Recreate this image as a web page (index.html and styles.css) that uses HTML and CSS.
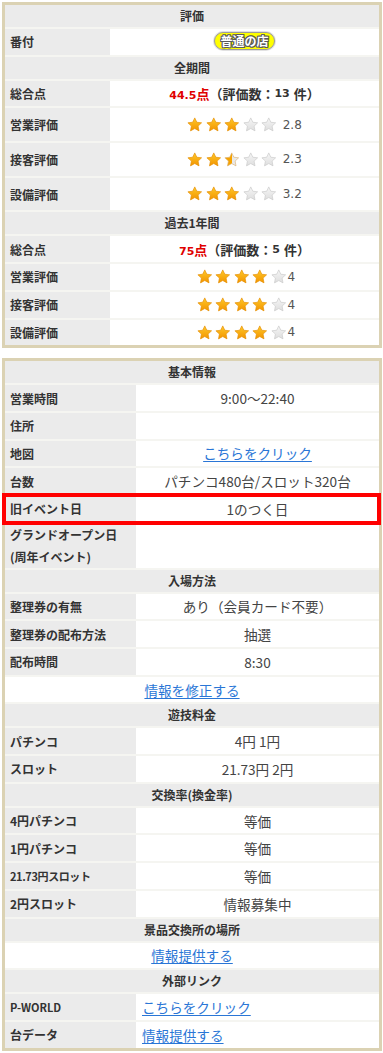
FILE: index.html
```html
<!DOCTYPE html>
<html lang="ja">
<head>
<meta charset="utf-8">
<title>評価</title>
<link rel="stylesheet" href="styles.css">
</head>
<body>
<svg class="defs" aria-hidden="true">
  <defs>
    <linearGradient id="gOn" x1="0" y1="0" x2="0" y2="1">
      <stop offset="0" stop-color="#ffc928"/>
      <stop offset="1" stop-color="#f29400"/>
    </linearGradient>
    <linearGradient id="gOff" x1="0" y1="0" x2="0" y2="1">
      <stop offset="0" stop-color="#f6f6f6"/>
      <stop offset="1" stop-color="#dedede"/>
    </linearGradient>
    <linearGradient id="gHalf" x1="0" y1="0" x2="1" y2="0">
      <stop offset="0" stop-color="#f6a300"/>
      <stop offset="0.5" stop-color="#f6a300"/>
      <stop offset="0.5" stop-color="#e9e9e9"/>
      <stop offset="1" stop-color="#e9e9e9"/>
    </linearGradient>
    <symbol id="st" viewBox="0 0 24 24">
      <path d="M12 1.4 15.2 8.1 22.6 9 17.2 14.1 18.6 21.5 12 17.9 5.4 21.5 6.8 14.1 1.4 9 8.8 8.1Z"/>
    </symbol>
  </defs>
</svg>

<div class="page">
  <section class="box b1">
    <div class="hd first">評価</div>
    <div class="row"><div class="lb">番付</div><div class="val"><span class="badge">普通の店</span></div></div>
    <div class="hd">全期間</div>
    <div class="row"><div class="lb">総合点</div><div class="val score"><span class="pt"><span class="dg">44.5</span>点</span>（評価数：<span class="dg cnt">13</span>件）</div></div>
    <div class="row tall"><div class="lb">営業評価</div><div class="val">
      <span class="stars">
        <svg class="star on"><use href="#st"/></svg><svg class="star on"><use href="#st"/></svg><svg class="star on"><use href="#st"/></svg><svg class="star off"><use href="#st"/></svg><svg class="star off"><use href="#st"/></svg>
      </span><span class="rate">2.8</span></div></div>
    <div class="row tall"><div class="lb">接客評価</div><div class="val">
      <span class="stars">
        <svg class="star on"><use href="#st"/></svg><svg class="star on"><use href="#st"/></svg><svg class="star half"><use href="#st"/></svg><svg class="star off"><use href="#st"/></svg><svg class="star off"><use href="#st"/></svg>
      </span><span class="rate">2.3</span></div></div>
    <div class="row tall"><div class="lb">設備評価</div><div class="val">
      <span class="stars">
        <svg class="star on"><use href="#st"/></svg><svg class="star on"><use href="#st"/></svg><svg class="star on"><use href="#st"/></svg><svg class="star off"><use href="#st"/></svg><svg class="star off"><use href="#st"/></svg>
      </span><span class="rate">3.2</span></div></div>
    <div class="hd">過去1年間</div>
    <div class="row"><div class="lb">総合点</div><div class="val score"><span class="pt"><span class="dg">75</span>点</span>（評価数：<span class="dg cnt">5</span>件）</div></div>
    <div class="row"><div class="lb">営業評価</div><div class="val shift">
      <span class="stars">
        <svg class="star on"><use href="#st"/></svg><svg class="star on"><use href="#st"/></svg><svg class="star on"><use href="#st"/></svg><svg class="star on"><use href="#st"/></svg><svg class="star off"><use href="#st"/></svg>
      </span><span class="rate tight">4</span></div></div>
    <div class="row"><div class="lb">接客評価</div><div class="val shift">
      <span class="stars">
        <svg class="star on"><use href="#st"/></svg><svg class="star on"><use href="#st"/></svg><svg class="star on"><use href="#st"/></svg><svg class="star on"><use href="#st"/></svg><svg class="star off"><use href="#st"/></svg>
      </span><span class="rate tight">4</span></div></div>
    <div class="row"><div class="lb">設備評価</div><div class="val shift">
      <span class="stars">
        <svg class="star on"><use href="#st"/></svg><svg class="star on"><use href="#st"/></svg><svg class="star on"><use href="#st"/></svg><svg class="star on"><use href="#st"/></svg><svg class="star off"><use href="#st"/></svg>
      </span><span class="rate tight">4</span></div></div>
  </section>

  <section class="box b2">
    <div class="hd first">基本情報</div>
    <div class="row"><div class="lb">営業時間</div><div class="val">9:00～22:40</div></div>
    <div class="row"><div class="lb">住所</div><div class="val"></div></div>
    <div class="row"><div class="lb">地図</div><div class="val"><a href="#" class="link">こちらをクリック</a></div></div>
    <div class="row"><div class="lb">台数</div><div class="val">パチンコ480台/スロット320台</div></div>
    <div class="row hl"><div class="lb">旧イベント日</div><div class="val">1のつく日</div></div>
    <div class="row grand"><div class="lb two">グランドオープン日<br>(周年イベント)</div><div class="val"></div></div>
    <div class="hd">入場方法</div>
    <div class="row"><div class="lb">整理券の有無</div><div class="val">あり（会員カード不要）</div></div>
    <div class="row"><div class="lb">整理券の配布方法</div><div class="val">抽選</div></div>
    <div class="row"><div class="lb">配布時間</div><div class="val">8:30</div></div>
    <div class="full"><a href="#" class="link">情報を修正する</a></div>
    <div class="hd">遊技料金</div>
    <div class="row"><div class="lb">パチンコ</div><div class="val">4円 1円</div></div>
    <div class="row"><div class="lb">スロット</div><div class="val">21.73円 2円</div></div>
    <div class="hd">交換率(換金率)</div>
    <div class="row"><div class="lb">4円パチンコ</div><div class="val">等価</div></div>
    <div class="row"><div class="lb">1円パチンコ</div><div class="val">等価</div></div>
    <div class="row"><div class="lb sm">21.73円スロット</div><div class="val">等価</div></div>
    <div class="row"><div class="lb">2円スロット</div><div class="val">情報募集中</div></div>
    <div class="hd">景品交換所の場所</div>
    <div class="full"><a href="#" class="link">情報提供する</a></div>
    <div class="hd">外部リンク</div>
    <div class="row"><div class="lb latin">P-WORLD</div><div class="val left"><a href="#" class="link">こちらをクリック</a></div></div>
    <div class="row"><div class="lb">台データ</div><div class="val left"><a href="#" class="link">情報提供する</a></div></div>
  </section>
</div>
</body>
</html>
```

FILE: styles.css
```css
* {
  box-sizing: border-box;
}

body {
  margin: 0;
  background: #ffffff;
  font-family: "Noto Sans CJK JP", "Noto Sans", sans-serif;
  color: #333333;
}

.defs {
  display: block;
  width: 0;
  height: 0;
  overflow: hidden;
}

.page {
  padding: 2px 1px 4px 2px;
}

.box {
  width: 380px;
  border: 3px solid #dbd2b3;
  background: #ffffff;
}

.box + .box {
  margin-top: 10px;
}

.b1 {
  --lw: 105px;
}

.b2 {
  --lw: 131px;
}

.box > * + * {
  border-top: 2px solid #f5f5f1;
}

.hd {
  height: 24px;
  background: #ebebeb;
  display: flex;
  align-items: center;
  justify-content: center;
  font-size: 12px;
  font-weight: 700;
  color: #333333;
  line-height: 1;
}

.hd.first {
  height: 22px;
}

.row {
  display: flex;
  height: 27.7px;
}

.row.tall {
  height: 34.7px;
}

.row.grand {
  height: 46px;
}

.lb {
  flex: none;
  width: var(--lw);
  background: #ebebeb;
  display: flex;
  align-items: center;
  padding-left: 5px;
  font-size: 12px;
  font-weight: 700;
  color: #333333;
  white-space: nowrap;
}

.lb.two {
  display: block;
  line-height: 22px;
}

.lb.sm {
  font-size: 11px;
  letter-spacing: -0.4px;
}

.lb.latin {
  font-size: 11px;
}

.val {
  flex: 1;
  display: flex;
  align-items: center;
  justify-content: center;
  font-size: 13.6px;
  color: #444444;
  white-space: nowrap;
}

.val.left {
  justify-content: flex-start;
  padding-left: 6px;
}

.val.shift {
  padding-left: 3px;
}

.full {
  height: 27.7px;
  display: flex;
  align-items: center;
  justify-content: center;
  font-size: 13.6px;
}

.link {
  color: #2a76d6;
  text-decoration: underline;
  text-underline-offset: 2px;
}

.row.hl {
  position: relative;
}

.row.hl::after {
  content: "";
  position: absolute;
  left: -3px;
  right: -2px;
  top: -3px;
  bottom: -3px;
  border: 4px solid #ff0000;
  z-index: 1;
  pointer-events: none;
}

.badge {
  display: inline-block;
  height: 18px;
  line-height: 16px;
  padding: 0 5px;
  margin-top: -2px;
  background: #ffff00;
  border: 1px solid #9c9c9c;
  border-radius: 9px;
  box-shadow: 0 0 0 1px #e2e2e2;
  font-size: 12px;
  font-weight: 700;
  color: #ffffff;
  text-shadow: 1px 0 #5a5a5a, -1px 0 #5a5a5a, 0 1px #5a5a5a, 0 -1px #5a5a5a,
    1px 1px #5a5a5a, -1px -1px #5a5a5a, 1px -1px #5a5a5a, -1px 1px #5a5a5a;
}

.score {
  font-size: 13px;
  font-weight: 700;
  color: #333333;
}

.score .dg {
  font-family: "DejaVu Sans", sans-serif;
  font-size: 11px;
}

.score .cnt {
  margin-right: 4px;
}

.pt {
  color: #e00000;
}

.stars {
  display: flex;
  gap: 3px;
}

.star {
  width: 15.5px;
  height: 15.5px;
  stroke-width: 1;
}

.star.on {
  fill: url(#gOn);
  stroke: #e48d00;
}

.star.off {
  fill: url(#gOff);
  stroke: #c9c9c9;
}

.star.half {
  fill: url(#gHalf);
  stroke: #d9b070;
}

.rate {
  margin-left: 6px;
  font-family: "DejaVu Sans", sans-serif;
  font-size: 12px;
  color: #555555;
}

.rate.tight {
  margin-left: 1px;
}
```
